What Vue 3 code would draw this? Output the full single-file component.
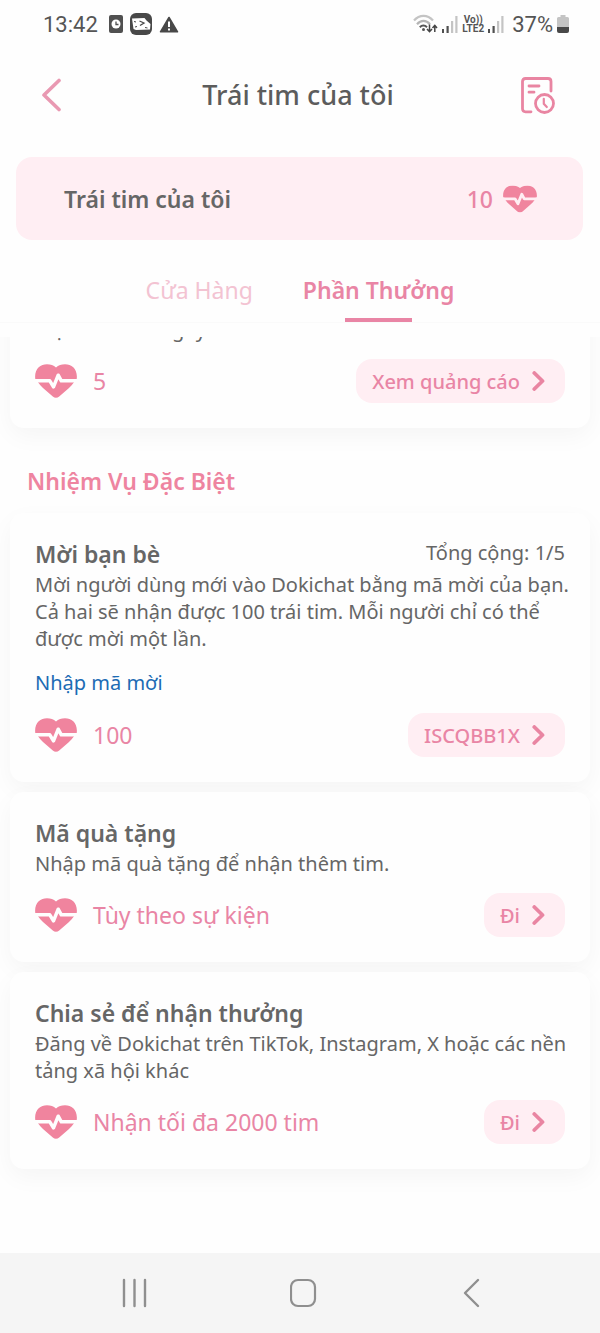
<script setup>
import { ref } from 'vue'

const activeTab = ref('rewards')
const tabs = [
  { id: 'shop', label: 'Cửa Hàng' },
  { id: 'rewards', label: 'Phần Thưởng' },
]

const daily = [
  { title: 'Xem quảng cáo', desc: 'Một lần theo ngày', reward: '5', action: 'Xem quảng cáo' },
]

const special = [
  {
    title: 'Mời bạn bè',
    total: 'Tổng cộng: 1/5',
    desc: 'Mời người dùng mới vào Dokichat bằng mã mời của bạn. Cả hai sẽ nhận được 100 trái tim. Mỗi người chỉ có thể được mời một lần.',
    link: 'Nhập mã mời',
    reward: '100',
    action: 'ISCQBB1X',
  },
  { title: 'Mã quà tặng', desc: 'Nhập mã quà tặng để nhận thêm tim.', reward: 'Tùy theo sự kiện', action: 'Đi' },
  {
    title: 'Chia sẻ để nhận thưởng',
    desc: 'Đăng về Dokichat trên TikTok, Instagram, X hoặc các nền tảng xã hội khác',
    reward: 'Nhận tối đa 2000 tim',
    action: 'Đi',
  },
]

const groups = [
  { id: 'daily', heading: '', items: daily },
  { id: 'special', heading: 'Nhiệm Vụ Đặc Biệt', items: special },
]
</script>

<template>
  <div class="screen">
    <svg width="0" height="0" class="defs" aria-hidden="true">
      <mask id="pulse" maskUnits="userSpaceOnUse" x="0" y="0" width="42" height="34">
        <rect width="42" height="34" fill="#fff" />
        <path d="M0 16.800H14.800L18.500 22.800 23.200 11.200 26.300 16.800H42" fill="none" stroke="#000" stroke-width="3.500" stroke-linejoin="round" />
      </mask>
      <symbol id="heart" viewBox="0 0 42 34">
        <path mask="url(#pulse)" d="M0.300 15.200C-1 5.400 5 0.300 12 0.300c3.600 0 6.600 1.200 9 3.200C23.400 1.500 26.400 0.300 30 0.300c7 0 13 5.100 11.700 14.900H40.500L38.800 18.400C37.500 20.300 36 22 34 23.900l-9.800 8.500c-1.900 1.700-4.500 1.700-6.400 0L8 23.900C6 22 4.500 20.300 3.200 18.400L1.500 15.200z" />
      </symbol>
    </svg>

    <div class="status">
      <div class="status-left">
        <span>13:42</span>
        <svg width="14" height="18" viewBox="0 0 14 18">
          <rect width="14" height="18" rx="2" fill="#505050" />
          <circle cx="7" cy="9" r="4.500" fill="#fff" />
          <path d="M7 6.500V9.500H9.500" fill="none" stroke="#505050" stroke-width="1.300" />
        </svg>
        <svg width="22" height="22" viewBox="0 0 22 22">
          <rect width="22" height="22" rx="6" fill="#484848" />
          <path d="M2 5.500 14.500 5l2 2.500L20.500 11l-.5 5.500-14 .5L3.500 16z" fill="#fff" />
          <path d="M9.500 8 14 10l-4 2.500" fill="none" stroke="#484848" stroke-width="1.300" />
          <path d="M4 8.500l2 .5M5 14l2-.5M15 14.500l2.500.5" fill="none" stroke="#484848" stroke-width="1" />
        </svg>
        <svg width="20" height="17" viewBox="0 0 20 17">
          <path d="M10 1.500 18.500 15.800H1.500z" fill="#484848" stroke="#484848" stroke-width="1.600" stroke-linejoin="round" />
          <path d="M10 5.500v5.500M10 12.500v2" stroke="#fff" stroke-width="2" />
        </svg>
      </div>
      <div class="status-right">
        <svg width="25" height="20" viewBox="0 0 25 20" fill="none">
          <path d="M1 6.500C6.500.2 14.500.2 20 6.500" stroke="#c4c4c4" stroke-width="2.200" />
          <path d="M4 10.200c4-4.500 9-4.500 13 0" stroke="#b4b4b4" stroke-width="2.200" />
          <path d="M6.800 13.200c2.200-2.300 5-2.300 7.200 0" stroke="#555" stroke-width="2" />
          <circle cx="10.500" cy="15.500" r="1.500" fill="#555" />
          <path d="M16.500 10.500v7M14 15l2.500 2.700L19 15M21.800 18v-6M19.500 14l2.300-2.700L24 14" stroke="#444" stroke-width="1.500" />
        </svg>
        <svg width="16" height="17" viewBox="0 0 16 17">
          <path d="M0 13h2v4H0zM4.500 10h2.200v7H4.500z" fill="#505050" />
          <path d="M9 5h2.200v12H9zM13.300 0h2.200v17h-2.200z" fill="#c4c4c4" />
        </svg>
        <div class="lte"><span>Vo))</span><span>LTE2</span></div>
        <svg width="16" height="17" viewBox="0 0 16 17">
          <path d="M0 13h2v4H0zM4.500 10h2.200v7H4.500z" fill="#505050" />
          <path d="M9 5h2.200v12H9zM13.300 0h2.200v17h-2.200z" fill="#c4c4c4" />
        </svg>
        <span class="percent">37%</span>
        <svg width="12" height="18" viewBox="0 0 12 18">
          <path d="M3.500 0h5v2H10.500q1.500 0 1.500 1.500V12H0V3.500Q0 2 1.500 2h2z" fill="#c4c4c4" />
          <path d="M0 12h12v4q0 2-2 2H2q-2 0-2-2z" fill="#484848" />
        </svg>
      </div>
    </div>

    <header class="header">
      <button class="icon-button" aria-label="Quay lại">
        <svg width="20" height="34" viewBox="0 0 20 34">
          <path d="M18 2.500 3 17l15 14.500" fill="none" stroke="#e999b2" stroke-width="3.600" stroke-linecap="round" stroke-linejoin="round" />
        </svg>
      </button>
      <h1>Trái tim của tôi</h1>
      <button class="icon-button" aria-label="Lịch sử">
        <svg width="34" height="37" viewBox="0 0 34 37" fill="none" stroke="#e985a2" stroke-width="2.800" stroke-linecap="round">
          <path d="M10 34.800H4.500Q1.500 34.800 1.500 31.800V4.500Q1.500 1.500 4.500 1.500H27Q30 1.500 30 4.500V14" />
          <path d="M8 9h10M8 15.200h5" />
          <circle cx="23.500" cy="26.500" r="9" />
          <path d="M22.800 21.800v5l3 3.200" stroke-width="2.200" />
        </svg>
      </button>
    </header>

    <section class="balance">
      <span>Trái tim của tôi</span>
      <span class="amount">10 <svg width="34" height="28"><use href="#heart" /></svg></span>
    </section>

    <nav class="tabs">
      <button
        v-for="tab in tabs"
        :key="tab.id"
        :class="['tab', { active: tab.id === activeTab }]"
        @click="activeTab = tab.id"
      >{{ tab.label }}</button>
    </nav>

    <main class="list">
      <section v-for="group in groups" :key="group.id" :class="['group', group.id]">
        <h2 v-if="group.heading">{{ group.heading }}</h2>
        <article v-for="item in group.items" :key="item.title" class="card">
          <div class="card-head">
            <h3>{{ item.title }}</h3>
            <span v-if="item.total" class="total">{{ item.total }}</span>
          </div>
          <p>{{ item.desc }}</p>
          <a v-if="item.link" href="#" class="link">{{ item.link }}</a>
          <div class="card-foot">
            <svg width="42" height="34" class="heart"><use href="#heart" /></svg>
            <span class="reward">{{ item.reward }}</span>
            <button class="pill">
              {{ item.action }}
              <svg width="13" height="20" viewBox="0 0 13 20">
                <path d="M2.300 2 10.500 10l-8.200 8" fill="none" stroke="#e985a2" stroke-width="3.800" stroke-linecap="round" stroke-linejoin="round" />
              </svg>
            </button>
          </div>
        </article>
      </section>
    </main>

    <div class="navbar">
      <button aria-label="Gần đây">
        <svg width="28" height="30" viewBox="0 0 28 30">
          <path d="M3 2v26M13.500 2v26M24 2v26" stroke="#8f8f8f" stroke-width="2.400" stroke-linecap="round" />
        </svg>
      </button>
      <button aria-label="Trang chủ">
        <svg width="28" height="30" viewBox="0 0 28 30">
          <rect x="1" y="2" width="24" height="26" rx="7" fill="none" stroke="#8f8f8f" stroke-width="2.200" />
        </svg>
      </button>
      <button aria-label="Trở về">
        <svg width="28" height="30" viewBox="0 0 28 30">
          <path d="M20 2 7 15l13 13" fill="none" stroke="#8f8f8f" stroke-width="2.400" stroke-linecap="round" stroke-linejoin="round" />
        </svg>
      </button>
    </div>
  </div>
</template>

<style>
body {
  margin: 0;
  background: #fefefe;
}
</style>

<style scoped>
.screen {
  display: flex;
  flex-direction: column;
  min-height: 100vh;
  box-sizing: border-box;
  background: #fefefe;
  color: #666;
  font-family: "Noto Sans", "Open Sans", sans-serif;
}
.defs {
  position: absolute;
}
svg {
  display: block;
  flex: none;
}
button {
  border: 0;
  padding: 0;
  background: none;
  font: inherit;
  color: inherit;
  cursor: pointer;
}
h1, h2, h3, p {
  margin: 0;
}
.status {
  display: flex;
  justify-content: space-between;
  align-items: center;
  height: 48px;
  padding: 0 31px 0 43px;
  font-family: Roboto, sans-serif;
  font-size: 22px;
  color: #555;
}
.status-left {
  display: flex;
  align-items: center;
  gap: 7px;
}
.status-left span {
  margin-right: 4px;
}
.status-right {
  display: flex;
  align-items: center;
  gap: 4px;
}
.lte {
  display: flex;
  flex-direction: column;
  align-items: center;
  font-size: 10px;
  line-height: 9px;
  font-weight: 700;
}
.percent {
  margin-left: 4px;
}
.header {
  display: flex;
  align-items: center;
  justify-content: space-between;
  height: 94px;
  padding: 0 45px 0 41px;
}
.icon-button {
  display: flex;
  width: 34px;
}
.header h1 {
  font-size: 27px;
  font-weight: 500;
  line-height: 36px;
  color: #5c5c5c;
}
.balance {
  display: flex;
  align-items: center;
  justify-content: space-between;
  height: 83px;
  margin: 15px 17px 0 16px;
  padding: 0 46px 0 48px;
  border-radius: 16px;
  background: #ffeef3;
  font-size: 23px;
  font-weight: 600;
}
.amount {
  display: flex;
  align-items: center;
  gap: 10px;
  font-weight: 500;
  color: #e985a5;
}
.amount svg, .heart {
  fill: #f0849e;
}
.tabs {
  display: flex;
  justify-content: center;
  gap: 50px;
  height: 82px;
  border-bottom: 1px solid #fafafa;
}
.tab {
  display: flex;
  flex-direction: column;
  align-items: center;
  justify-content: flex-end;
  gap: 12px;
  font-size: 23px;
  line-height: 32px;
  color: #f3c3d2;
}
.tab::after {
  content: "";
  width: 67px;
  height: 4px;
}
.tab.active {
  font-weight: 600;
  color: #e985a5;
}
.tab.active::after {
  background: #e985a5;
}
.list {
  flex: 1;
  margin-top: 14px;
  overflow: hidden;
}
.daily {
  margin-top: -79px;
}
h2 {
  margin: 36px 27px 15px;
  font-size: 23px;
  line-height: 34px;
  font-weight: 600;
  color: #ee84a0;
}
.card {
  margin: 0 10px 10px;
  padding: 25px;
  border-radius: 14px;
  background: #fefefe;
  box-shadow: 0 8px 24px rgba(0, 0, 0, 0.04);
}
.card-head {
  display: flex;
  justify-content: space-between;
  align-items: flex-start;
}
h3 {
  font-size: 23px;
  line-height: 33px;
  font-weight: 600;
}
.total {
  font-size: 20px;
  line-height: 29px;
}
.card p {
  margin-right: -8px;
  font-size: 20px;
  line-height: 27px;
}
.link {
  display: block;
  width: fit-content;
  margin-top: 16px;
  font-size: 20px;
  line-height: 29px;
  color: #1c6bb4;
  text-decoration: none;
}
.card-foot {
  display: flex;
  align-items: center;
  margin-top: 16px;
}
.reward {
  flex: 1;
  margin-left: 16px;
  font-size: 23px;
  line-height: 32px;
  color: #e985a5;
}
.pill {
  display: flex;
  align-items: center;
  gap: 12px;
  height: 44px;
  padding: 0 20px 0 16px;
  border-radius: 16px;
  background: #ffeef3;
  font-size: 20px;
  font-weight: 500;
  color: #e985a5;
}
.navbar {
  display: flex;
  align-items: center;
  justify-content: space-between;
  height: 80px;
  padding: 0 114px 0 121px;
  background: #f5f5f5;
}
</style>
